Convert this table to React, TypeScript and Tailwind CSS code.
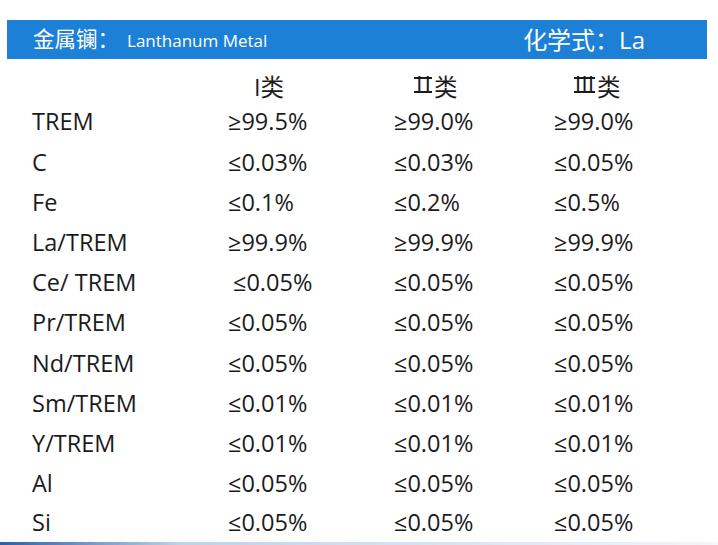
import React from "react";

const rows: [string, string, string, string][] = [
  ["TREM", "≥99.5%", "≥99.0%", "≥99.0%"],
  ["C", "≤0.03%", "≤0.03%", "≤0.05%"],
  ["Fe", "≤0.1%", "≤0.2%", "≤0.5%"],
  ["La/TREM", "≥99.9%", "≥99.9%", "≥99.9%"],
  ["Ce/ TREM", "≤0.05%", "≤0.05%", "≤0.05%"],
  ["Pr/TREM", "≤0.05%", "≤0.05%", "≤0.05%"],
  ["Nd/TREM", "≤0.05%", "≤0.05%", "≤0.05%"],
  ["Sm/TREM", "≤0.01%", "≤0.01%", "≤0.01%"],
  ["Y/TREM", "≤0.01%", "≤0.01%", "≤0.01%"],
  ["Al", "≤0.05%", "≤0.05%", "≤0.05%"],
  ["Si", "≤0.05%", "≤0.05%", "≤0.05%"],
];

const font = { fontFamily: '"Open Sans", "Noto Sans CJK SC", sans-serif' };

// Roman numeral with serif bars, like the printed Ⅱ / Ⅲ
const Numeral = ({ text, wide }: { text: string; wide?: boolean }) => (
  <span
    className={`block h-[16px] border-y-2 border-[#1b1b1b] leading-[11px] text-center mb-[4px] ${
      wide ? "w-[21px] tracking-[0px]" : "w-[18px] tracking-[2px] pl-[2px]"
    }`}
  >
    {text}
  </span>
);

const App = () => {
  return (
    <div className="w-[718px] h-[545px] bg-white text-[#1b1b1b] flex flex-col overflow-hidden" style={font}>
      <div className="pt-[20px] pl-[7px] pr-[11px]">
        <div className="h-[39px] bg-[#1c80d6] text-white flex items-center justify-between pl-[26px] pr-[62px]">
          <div className="flex items-baseline">
            <span className="text-[21.5px]">金属镧：</span>
            <span className="text-[17px] ml-[8px]">Lanthanum Metal</span>
          </div>
          <div className="text-[24px]">化学式：La</div>
        </div>
      </div>

      <div className="grid grid-cols-[196px_166px_160px_1fr] pl-[32px] pt-[13px] h-[44px] text-[23.5px] leading-[30px]">
        <div />
        <div className="pl-[26px]">I类</div>
        <div className="pl-[20px] flex items-center">
          <Numeral text="II" />
          <span className="ml-[2px]">类</span>
        </div>
        <div className="pl-[20px] flex items-center">
          <Numeral text="III" wide />
          <span className="ml-[2px]">类</span>
        </div>
      </div>

      <div className="flex flex-col">
        {rows.map((r, i) => (
          <div
            key={r[0]}
            className={`grid grid-cols-[196px_166px_160px_1fr] pl-[32px] items-center text-[23.5px] ${
              i === rows.length - 1 ? "h-[38px]" : "h-[40.2px]"
            }`}
          >
            <div>{r[0]}</div>
            <div className={r[0] === "Ce/ TREM" ? "pl-[5px]" : ""}>{r[1]}</div>
            <div>{r[2]}</div>
            <div>{r[3]}</div>
          </div>
        ))}
      </div>

      <div className="h-[4px] bg-gradient-to-r from-[#2b5fa8] via-[#bfd2e8] via-25% to-[#f3f6fa]" />
    </div>
  );
};

export default App;
